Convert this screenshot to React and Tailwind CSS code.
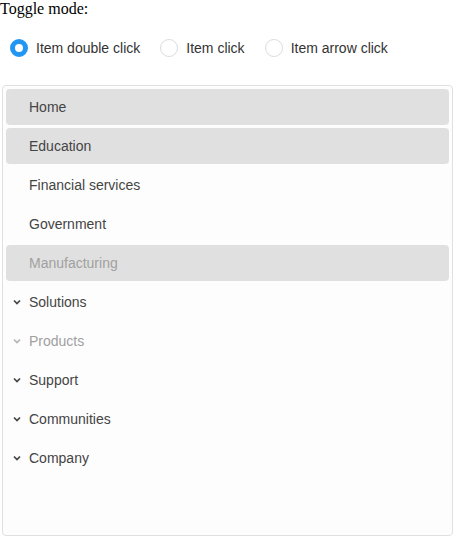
import React from "react";

const modes = ["Item double click", "Item click", "Item arrow click"];

const items = [
  { label: "Home", selected: true },
  { label: "Education", selected: true },
  { label: "Financial services" },
  { label: "Government" },
  { label: "Manufacturing", selected: true, disabled: true },
  { label: "Solutions", parent: true },
  { label: "Products", parent: true, disabled: true },
  { label: "Support", parent: true },
  { label: "Communities", parent: true },
  { label: "Company", parent: true },
];

const Chevron = ({ muted }) => (
  <svg
    width="8"
    height="6"
    viewBox="0 0 8 6"
    className={muted ? "text-[#b5b5b5]" : "text-[#444]"}
  >
    <path d="M1 1.5 L4 4.5 L7 1.5" fill="none" stroke="currentColor" strokeWidth="1.7" />
  </svg>
);

function Radio({ label, checked }) {
  return (
    <label className="flex items-center gap-[8px] mr-[20px]">
      {checked ? (
        <span className="w-[18px] h-[18px] rounded-full border-[5px] border-[#2196f3] bg-white" />
      ) : (
        <span className="w-[18px] h-[18px] rounded-full border border-[#dcdcdc] bg-white" />
      )}
      <span className="text-[14px] text-[#333]">{label}</span>
    </label>
  );
}

export default function App() {
  return (
    <div className="w-[457px] h-[538px] bg-white font-['Liberation_Sans',Arial,sans-serif]">
      <div className="font-['Liberation_Serif','Times_New_Roman',serif] text-[16px] leading-[18px] text-black">
        Toggle mode:
      </div>
      {/* mode switch */}
      <div className="flex items-center h-[36px] mt-[12px] pl-[10px]">
        {modes.map((m, i) => (
          <Radio key={m} label={m} checked={i === 0} />
        ))}
      </div>

      {/* tree view */}
      <div className="mt-[19px] ml-[2px] w-[451px] h-[451px] border border-[#e0e0e0] rounded-[4px] bg-[#fdfdfd] p-[3px] flex flex-col gap-[3px]">
        {items.map((item) => (
          <div
            key={item.label}
            className={`h-[36px] flex items-center rounded-[4px] text-[14px] ${
              item.selected ? "bg-[#e0e0e0]" : ""
            } ${item.disabled ? "text-[#a0a0a0]" : "text-[#444]"} ${
              item.parent ? "pl-[7px]" : "pl-[23px]"
            }`}
          >
            {item.parent && (
              <span className="w-[16px] flex items-center">
                <Chevron muted={item.disabled} />
              </span>
            )}
            {item.label}
          </div>
        ))}
      </div>
    </div>
  );
}
